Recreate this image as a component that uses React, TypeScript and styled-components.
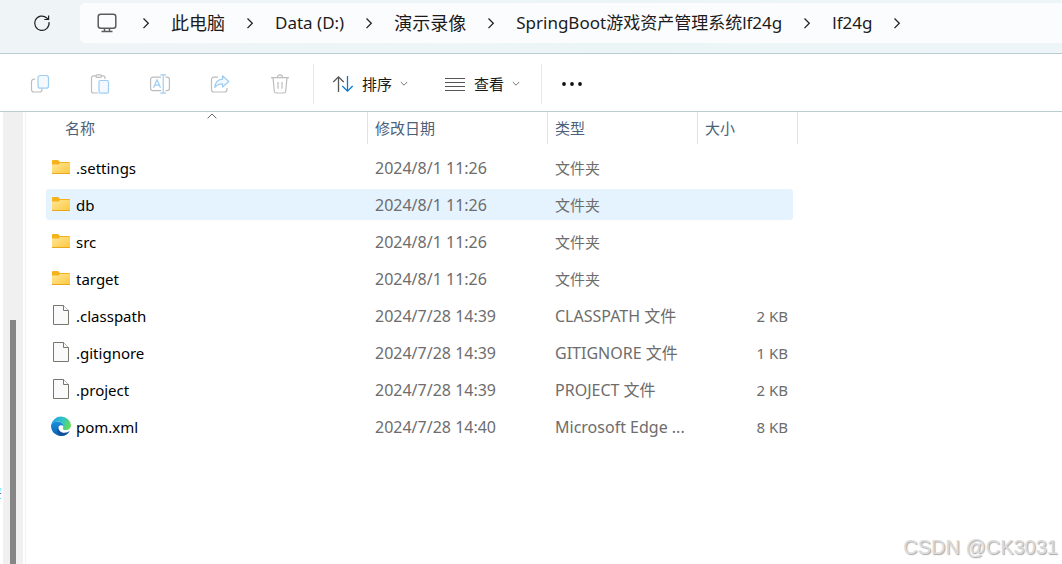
import React from 'react';
import styled, { createGlobalStyle } from 'styled-components';

const GlobalStyle = createGlobalStyle`
  * { box-sizing: border-box; }
  body {
    margin: 0;
    background: #fff;
    color: #1a1a1a;
    font-family: 'Noto Sans', 'Noto Sans CJK SC', sans-serif;
  }
  button {
    margin: 0;
    padding: 0;
    border: 0;
    background: none;
    font: inherit;
    color: inherit;
    cursor: pointer;
  }
  svg { display: block; flex: none; }
`;

const Window = styled.div`
  position: relative;
  display: flex;
  flex-direction: column;
  min-height: 100vh;
  overflow: hidden;
`;

const AddressBar = styled.header`
  display: flex;
  height: 54px;
  padding: 3px 0 10px 32px;
  background: linear-gradient(90deg, #eff4f7, #ecf5f6 60%, #eef5f9);
  border-bottom: 1px solid #b9ccd1;
`;

const RefreshButton = styled.button`
  display: grid;
  place-items: center;
  width: 20px;
  margin-right: 28px;
`;

const Breadcrumbs = styled.nav`
  display: flex;
  flex: 1;
  align-items: center;
  min-width: 0;
  padding-left: 17px;
  background: #fbfcfe;
  border-radius: 5px 0 0 5px;
`;

const RootCrumb = styled.a`
  margin-right: 4px;
`;

const Crumb = styled.a<{ $size?: number }>`
  font-size: ${p => p.$size ?? 17}px;
  line-height: 24px;
  color: #1b1b1b;
  text-decoration: none;
  white-space: nowrap;
`;

const CrumbArrow = styled.span`
  display: grid;
  place-items: center;
  flex: none;
  width: 50px;
`;

const Toolbar = styled.div`
  display: flex;
  align-items: center;
  height: 58px;
  padding: 2px 0 0 10px;
  border-bottom: 1px solid #b9ccd1;
`;

const IconButton = styled.button`
  display: grid;
  place-items: center;
  width: 60px;
  height: 40px;
`;

const Divider = styled.span`
  width: 1px;
  height: 40px;
  margin-left: 3px;
  background: #e8e8e8;
`;

const MenuButton = styled.button`
  display: flex;
  align-items: center;
  gap: 8px;
  height: 40px;
  padding: 0 18px;
  font-size: 15px;
  line-height: 20px;
`;

const Main = styled.main`
  display: flex;
  flex: 1;
`;

const Sidebar = styled.aside`
  display: flex;
  width: 26px;
  padding-right: 2px;
  border-right: 1px solid #f3f3f3;
`;

const SidebarEdge = styled.div`
  width: 3px;
  padding-top: 376px;
`;

const ScrollTrack = styled.div`
  display: flex;
  width: 20px;
  padding: 208px 7px 0;
  background: #f0f0f0;
`;

const ScrollThumb = styled.div`
  width: 6px;
  background: #868686;
`;

const FileTable = styled.table`
  align-self: flex-start;
  width: 752px;
  margin-left: 20px;
  table-layout: fixed;
  border-collapse: collapse;
  font-size: 15px;
  line-height: 20px;
  color: #6d6d6d;
`;

const HeadCell = styled.th<{ $width: number }>`
  width: ${p => p.$width}px;
  padding: 0 0 5px;
  font-weight: 400;
  text-align: left;
`;

const HeadButton = styled.button<{ $inset: number }>`
  position: relative;
  display: block;
  width: 100%;
  height: 32px;
  padding-left: ${p => p.$inset}px;
  border-right: 1px solid #e2e2e2;
  color: #4c607a;
  text-align: left;
`;

const SortMark = styled.span`
  position: absolute;
  top: 1px;
  left: 50%;
`;

const BodyCell = styled.td`
  padding: 3px 0;
`;

const CellContent = styled.div<{ $selected: boolean; $kind?: 'name' | 'size'; $large?: boolean }>`
  display: flex;
  align-items: center;
  justify-content: ${p => (p.$kind === 'size' ? 'flex-end' : 'flex-start')};
  gap: 5px;
  height: 31px;
  margin-right: ${p => (p.$kind === 'size' ? 5 : 0)}px;
  padding: 0 5px 0 ${p => (p.$kind === 'name' ? 5 : 7)}px;
  border-radius: ${p => (p.$kind === 'name' ? '3px 0 0 3px' : p.$kind === 'size' ? '0 3px 3px 0' : '0')};
  background: ${p => (p.$selected ? '#e5f3ff' : 'transparent')};
  color: ${p => (p.$kind === 'name' ? '#000' : 'inherit')};
  font-size: ${p => (p.$large ? 16 : 15)}px;
  white-space: nowrap;
`;

const Watermark = styled.div`
  position: absolute;
  right: 4px;
  bottom: 5px;
  font-family: 'Liberation Sans', Arial, sans-serif;
  font-size: 20px;
  line-height: 24px;
  color: #dcdcdc;
  text-shadow: 1px 1px 1px #a8a8a8;
`;

const RefreshIcon = () => (
  <svg width="18" height="18" viewBox="0 0 18 18" fill="none" stroke="#222" strokeWidth="1.2">
    <path d="M16 8.200A7.200 7.200 0 1 1 13.800 4L15.400 5.400" />
    <path d="M15.600 1.400V5.500H11.300" />
  </svg>
);

const ComputerIcon = () => (
  <svg width="20" height="20" viewBox="0 0 20 20" fill="none" stroke="#5c5c5c" strokeWidth="1.5">
    <rect x="1.2" y="1.2" width="17.6" height="14" rx="2.5" />
    <path d="M7.5 15.5V18M12.5 15.5V18M4.5 18.6H15.5" />
  </svg>
);

const RightArrow = () => (
  <svg width="8" height="12" viewBox="0 0 8 12" fill="none" stroke="#222" strokeWidth="1.3">
    <path d="M1.500 1.500L6.300 6.300L1.500 11.100" />
  </svg>
);

const DownArrow = () => (
  <svg width="8" height="6" viewBox="0 0 8 6" fill="none" stroke="#777" strokeWidth="1">
    <path d="M0.800 1L4 4.200L7.200 1" />
  </svg>
);

const CopyIcon = () => (
  <svg width="20" height="20" viewBox="0 0 20 20" fill="none" strokeWidth="1.2">
    <path d="M5.2 5.2H4A2.5 2.5 0 0 0 1.5 7.7V15.5A2.5 2.5 0 0 0 4 18H9.5A2.5 2.5 0 0 0 12 15.5V14.8" stroke="#bdbdbd" />
    <rect x="8" y="1.5" width="10.5" height="12.7" rx="2.3" stroke="#9fcdf2" fill="#f3f9fe" />
  </svg>
);

const PasteIcon = () => (
  <svg width="20" height="20" viewBox="0 0 20 20" fill="none" strokeWidth="1.2">
    <path d="M6 1.8H3.5A2 2 0 0 0 1.500 3.800V17A2 2 0 0 0 3.500 19H8M11.500 1.800H13A2 2 0 0 1 15 3.800V5" stroke="#bdbdbd" />
    <rect x="6" y="0.8" width="5.5" height="2.6" rx="1.2" stroke="#bdbdbd" />
    <rect x="9" y="6.5" width="9.5" height="12.7" rx="1.5" stroke="#9fcdf2" fill="#f3f9fe" />
  </svg>
);

const RenameIcon = () => (
  <svg width="20" height="20" viewBox="0 0 20 20" fill="none" strokeWidth="1.2">
    <path d="M11 3.200H3A2.400 2.400 0 0 0 0.600 5.600V14.200A2.400 2.400 0 0 0 3 16.600H11M15.500 3.200H17A2.400 2.400 0 0 1 19.400 5.600V14.200A2.400 2.400 0 0 1 17 16.600H15.500" stroke="#bdbdbd" />
    <path d="M3.500 13.800L7 5.800L10.500 13.800M4.700 11.200H9.300M13.200 1V19M10.400 0.800H16M10.400 19.200H16" stroke="#9fcdf2" />
  </svg>
);

const ShareIcon = () => (
  <svg width="20" height="20" viewBox="0 0 20 20" fill="none" strokeWidth="1.2" strokeLinejoin="round">
    <path d="M8 3.200H4A2.500 2.500 0 0 0 1.500 5.700V15.500A2.500 2.500 0 0 0 4 18H14.500A2.500 2.500 0 0 0 17 15.500V14" stroke="#bdbdbd" />
    <path d="M12.500 1.800L18.800 7.500L12.500 13V9.800C9.200 9.700 6.800 10.800 4.800 13.500C5.200 8.800 8 5.500 12.500 5.200Z" stroke="#9fcdf2" fill="#f3f9fe" />
  </svg>
);

const TrashIcon = () => (
  <svg width="20" height="20" viewBox="0 0 20 20" fill="none" stroke="#bdbdbd" strokeWidth="1.2">
    <path d="M1 3.600H19M7.500 3.400A2.500 2.500 0 0 1 12.500 3.400M3 3.800L4.300 17.200A2 2 0 0 0 6.300 19H13.700A2 2 0 0 0 15.700 17.200L17 3.800M8 8V14.800M12 8V14.800" />
  </svg>
);

const SortIcon = () => (
  <svg width="22" height="18" viewBox="0 0 22 18" fill="none" strokeWidth="1.3">
    <path d="M6.500 17V2M1.300 7L6.500 1.800L11.700 7" stroke="#555" />
    <path d="M15.500 1V16M10.300 11L15.500 16.200L20.700 11" stroke="#0a78d4" />
  </svg>
);

const ViewIcon = () => (
  <svg width="22" height="14" viewBox="0 0 22 14" stroke="#555" strokeWidth="1">
    <path d="M1 1.500H21M1 5.500H21M1 9.500H21M1 13.500H21" />
  </svg>
);

const MoreIcon = () => (
  <svg width="20" height="4" viewBox="0 0 20 4" fill="#111">
    <circle cx="2" cy="2" r="1.900" />
    <circle cx="10" cy="2" r="1.900" />
    <circle cx="18" cy="2" r="1.900" />
  </svg>
);

const UpArrow = () => (
  <svg width="10" height="6" viewBox="0 0 10 6" fill="none" stroke="#666" strokeWidth="1">
    <path d="M0.600 5.300L5 1L9.400 5.300" />
  </svg>
);

const FolderIcon = () => (
  <svg width="20" height="21" viewBox="0 0 20 21">
    <defs>
      <linearGradient id="folder" x1="0" y1="0" x2="1" y2="1">
        <stop offset="0" stopColor="#ffe69a" />
        <stop offset="1" stopColor="#fdc83c" />
      </linearGradient>
    </defs>
    <path d="M1 4Q1 3 2 3H7L9 5H18Q19 5 19 6V9H1Z" fill="#f5b21a" />
    <path d="M1 7.500H7.500L9 6H19V17H1Z" fill="url(#folder)" />
    <path d="M1 16.500H19" stroke="#eaa61f" />
  </svg>
);

const DocumentIcon = () => (
  <svg width="20" height="21" viewBox="0 0 20 21" fill="#fafafa" stroke="#77776f" strokeWidth="1">
    <path d="M2.500 0.500H12.500L17.500 5.500V19.500H2.500Z" />
    <path d="M12.500 0.500V5.500H17.500" />
  </svg>
);

const EdgeIcon = () => (
  <svg width="20" height="21" viewBox="0 0 20 21">
    <defs>
      <linearGradient id="edgeTop" x1="0" y1="0.3" x2="1" y2="0.6">
        <stop offset="0" stopColor="#1f9fe0" />
        <stop offset="0.5" stopColor="#2fc3c9" />
        <stop offset="1" stopColor="#68dd50" />
      </linearGradient>
      <linearGradient id="edgeLeft" x1="0" y1="0" x2="0" y2="1">
        <stop offset="0" stopColor="#1791dc" />
        <stop offset="1" stopColor="#0b62b4" />
      </linearGradient>
    </defs>
    <path d="M0.200 9A10 10 0 0 1 20 9.300C20 12.400 17.700 14 15 14C12.600 14 11.400 13.200 11.900 12.200C13.200 10 11.500 5.800 7 5.600C3.700 5.500 1 7 0.200 9Z" fill="url(#edgeTop)" />
    <path d="M0 10C0 7.500 3 5.400 6.700 5.500C10.300 5.600 12.500 8 12.400 10.200C11.500 8.800 8.500 8.800 7.300 11.200C6 14.500 8.500 18.800 12.500 19.600A10 10 0 0 1 0 10Z" fill="url(#edgeLeft)" />
    <path d="M7.500 10.800C6.800 14 10 17 13.500 16.800C15.800 16.700 17.500 15.800 18.700 15C16.700 18.500 13.500 20.400 9.800 20C6 18.300 5.200 13.500 7.500 10.800Z" fill="#11509c" />
  </svg>
);

const HiddenLabelEdge = () => (
  <svg width="2" height="12" viewBox="0 0 2 12">
    <rect width="1" height="3" fill="#8ff0ff" />
    <rect y="5" width="1" height="1" fill="#3b6fd0" />
    <rect y="10" width="1" height="1" fill="#5fd8f8" />
    <rect x="1" width="1" height="11" fill="#fdfbc0" />
  </svg>
);

const crumbs = [
  { label: '此电脑', size: 18 },
  { label: 'Data (D:)' },
  { label: '演示录像', size: 18 },
  { label: 'SpringBoot游戏资产管理系统lf24g' },
  { label: 'lf24g' },
];

const tools = [
  { label: '复制', Icon: CopyIcon },
  { label: '粘贴', Icon: PasteIcon },
  { label: '重命名', Icon: RenameIcon },
  { label: '共享', Icon: ShareIcon },
  { label: '删除', Icon: TrashIcon },
];

const columns = [
  { label: '名称', width: 322, inset: 19, sorted: true },
  { label: '修改日期', width: 180, inset: 7 },
  { label: '类型', width: 150, inset: 7 },
  { label: '大小', width: 100, inset: 7 },
];

const files = [
  { name: '.settings', date: '2024/8/1 11:26', type: '文件夹', size: '', Icon: FolderIcon },
  { name: 'db', date: '2024/8/1 11:26', type: '文件夹', size: '', Icon: FolderIcon },
  { name: 'src', date: '2024/8/1 11:26', type: '文件夹', size: '', Icon: FolderIcon },
  { name: 'target', date: '2024/8/1 11:26', type: '文件夹', size: '', Icon: FolderIcon },
  { name: '.classpath', date: '2024/7/28 14:39', type: 'CLASSPATH 文件', size: '2 KB', Icon: DocumentIcon },
  { name: '.gitignore', date: '2024/7/28 14:39', type: 'GITIGNORE 文件', size: '1 KB', Icon: DocumentIcon },
  { name: '.project', date: '2024/7/28 14:39', type: 'PROJECT 文件', size: '2 KB', Icon: DocumentIcon },
  { name: 'pom.xml', date: '2024/7/28 14:40', type: 'Microsoft Edge ...', size: '8 KB', Icon: EdgeIcon },
];

export default function App() {
  const [selected, setSelected] = React.useState('db');
  return (
    <>
      <GlobalStyle />
      <Window>
        <AddressBar>
          <RefreshButton aria-label="刷新"><RefreshIcon /></RefreshButton>
          <Breadcrumbs>
            <RootCrumb href="#" aria-label="桌面"><ComputerIcon /></RootCrumb>
            <CrumbArrow><RightArrow /></CrumbArrow>
            {crumbs.map(c => (
              <React.Fragment key={c.label}>
                <Crumb href="#" $size={c.size}>{c.label}</Crumb>
                <CrumbArrow><RightArrow /></CrumbArrow>
              </React.Fragment>
            ))}
          </Breadcrumbs>
        </AddressBar>
        <Toolbar>
          {tools.map(({ label, Icon }) => (
            <IconButton key={label} aria-label={label}><Icon /></IconButton>
          ))}
          <Divider />
          <MenuButton><SortIcon />排序<DownArrow /></MenuButton>
          <MenuButton><ViewIcon />查看<DownArrow /></MenuButton>
          <Divider />
          <IconButton aria-label="更多"><MoreIcon /></IconButton>
        </Toolbar>
        <Main>
          <Sidebar>
            <SidebarEdge><HiddenLabelEdge /></SidebarEdge>
            <ScrollTrack><ScrollThumb /></ScrollTrack>
          </Sidebar>
          <FileTable>
            <thead>
              <tr>
                {columns.map(c => (
                  <HeadCell key={c.label} $width={c.width} scope="col">
                    <HeadButton $inset={c.inset}>
                      {c.label}
                      {c.sorted && <SortMark><UpArrow /></SortMark>}
                    </HeadButton>
                  </HeadCell>
                ))}
              </tr>
            </thead>
            <tbody>
              {files.map(({ name, date, type, size, Icon }) => {
                const on = name === selected;
                return (
                  <tr key={name} onClick={() => setSelected(name)}>
                    <BodyCell><CellContent $selected={on} $kind="name"><Icon />{name}</CellContent></BodyCell>
                    <BodyCell><CellContent $selected={on} $large>{date}</CellContent></BodyCell>
                    <BodyCell><CellContent $selected={on} $large={size !== ''}>{type}</CellContent></BodyCell>
                    <BodyCell><CellContent $selected={on} $kind="size">{size}</CellContent></BodyCell>
                  </tr>
                );
              })}
            </tbody>
          </FileTable>
        </Main>
        <Watermark>CSDN @CK3031</Watermark>
      </Window>
    </>
  );
}
